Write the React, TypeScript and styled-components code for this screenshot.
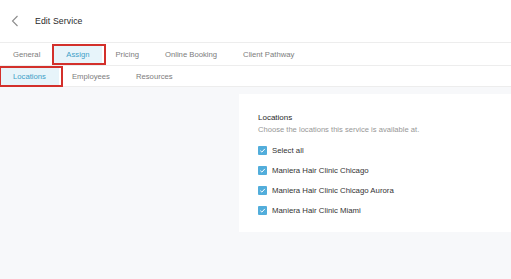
import React from "react";
import styled, { createGlobalStyle } from "styled-components";

const colors = {
  text: "#3d3d3d",
  muted: "#979797",
  tabText: "#7c7c7c",
  blue: "#3d9fc7",
  blueSoft: "#e7f4fa",
  line: "#ededed",
  page: "#f7f8fa",
  mark: "#d3302b",
  check: "#52addb",
};

const GlobalStyle = createGlobalStyle`
  html, body {
    margin: 0;
    padding: 0;
    background: #ffffff;
  }
  body {
    font-family: "Liberation Sans", Arial, sans-serif;
    color: ${colors.text};
  }
`;

const Screen = styled.div`
  width: 511px;
  height: 279px;
  display: flex;
  flex-direction: column;
  overflow: hidden;
`;

const Header = styled.header`
  height: 43px;
  display: flex;
  align-items: center;
  gap: 16px;
  padding-left: 11px;
  border-bottom: 1px solid ${colors.line};
  box-sizing: border-box;
`;

const Title = styled.h1`
  margin: 0;
  font-size: 8.7px;
  font-weight: normal;
  color: #2a2a2a;
  letter-spacing: 0.1px;
`;

const TabRow = styled.nav<{ $height: number }>`
  height: ${(p) => p.$height}px;
  display: flex;
  align-items: center;
  border-bottom: 1px solid ${colors.line};
  box-sizing: border-box;
  background: #ffffff;
`;

const Tab = styled.div<{ $active?: boolean; $marked?: boolean }>`
  position: relative;
  height: 17px;
  display: flex;
  align-items: center;
  padding: 0 13px;
  font-size: 7.7px;
  color: ${(p) => (p.$active ? colors.blue : colors.tabText)};
  background: ${(p) => (p.$active ? colors.blueSoft : "transparent")};

  ${(p) =>
    p.$marked &&
    `
    &:after {
      content: "";
      position: absolute;
      left: -1px;
      right: -4px;
      top: -2px;
      bottom: -2px;
      border: 2px solid ${colors.mark};
    }
  `}
`;

const Body = styled.main`
  flex: 1;
  background: ${colors.page};
  padding: 7px 0 0 239px;
  box-sizing: border-box;
`;

const Card = styled.section`
  background: #ffffff;
  height: 138px;
  padding: 18px 0 0 19px;
  box-sizing: border-box;
`;

const CardTitle = styled.h2`
  margin: 0;
  font-size: 8px;
  font-weight: normal;
  color: #2a2a2a;
  line-height: 12px;
`;

const CardHint = styled.p`
  margin: 0 0 8px;
  font-size: 7.6px;
  color: ${colors.muted};
  line-height: 12px;
`;

const OptionList = styled.ul`
  list-style: none;
  margin: 0;
  padding: 0;
  display: flex;
  flex-direction: column;
  gap: 8px;
`;

const Option = styled.li`
  display: flex;
  align-items: center;
  gap: 5px;
  height: 12px;
  font-size: 7.8px;
  color: #333333;
`;

const Box = styled.span`
  width: 9px;
  height: 9px;
  border-radius: 1px;
  background: ${colors.check};
  display: flex;
  align-items: center;
  justify-content: center;
`;

const Chevron = () => (
  <svg width="8" height="12" viewBox="0 0 8 12">
    <path d="M6.5 1 L1.5 6 L6.5 11" fill="none" stroke="#8c8c8c" strokeWidth="1.1" />
  </svg>
);

const Check = () => (
  <svg width="7" height="7" viewBox="0 0 7 7">
    <path d="M1.3 3.7 L2.9 5.1 L5.8 1.9" fill="none" stroke="#ffffff" strokeWidth="1" />
  </svg>
);

const mainTabs = ["General", "Assign", "Pricing", "Online Booking", "Client Pathway"];
const subTabs = ["Locations", "Employees", "Resources"];
const locations = [
  "Select all",
  "Maniera Hair Clinic Chicago",
  "Maniera Hair Clinic Chicago Aurora",
  "Maniera Hair Clinic Miami",
];

const App = () => {
  return (
    <>
      <GlobalStyle />
      <Screen>
        <Header>
          <Chevron />
          <Title>Edit Service</Title>
        </Header>
        <TabRow $height={23}>
          {mainTabs.map((t) => (
            <Tab key={t} $active={t === "Assign"} $marked={t === "Assign"}>
              {t}
            </Tab>
          ))}
        </TabRow>
        <TabRow $height={21}>
          {subTabs.map((t) => (
            <Tab key={t} $active={t === "Locations"} $marked={t === "Locations"}>
              {t}
            </Tab>
          ))}
        </TabRow>
        <Body>
          <Card>
            <CardTitle>Locations</CardTitle>
            <CardHint>Choose the locations this service is available at.</CardHint>
            <OptionList>
              {locations.map((l) => (
                <Option key={l}>
                  <Box>
                    <Check />
                  </Box>
                  {l}
                </Option>
              ))}
            </OptionList>
          </Card>
        </Body>
      </Screen>
    </>
  );
};

export default App;
